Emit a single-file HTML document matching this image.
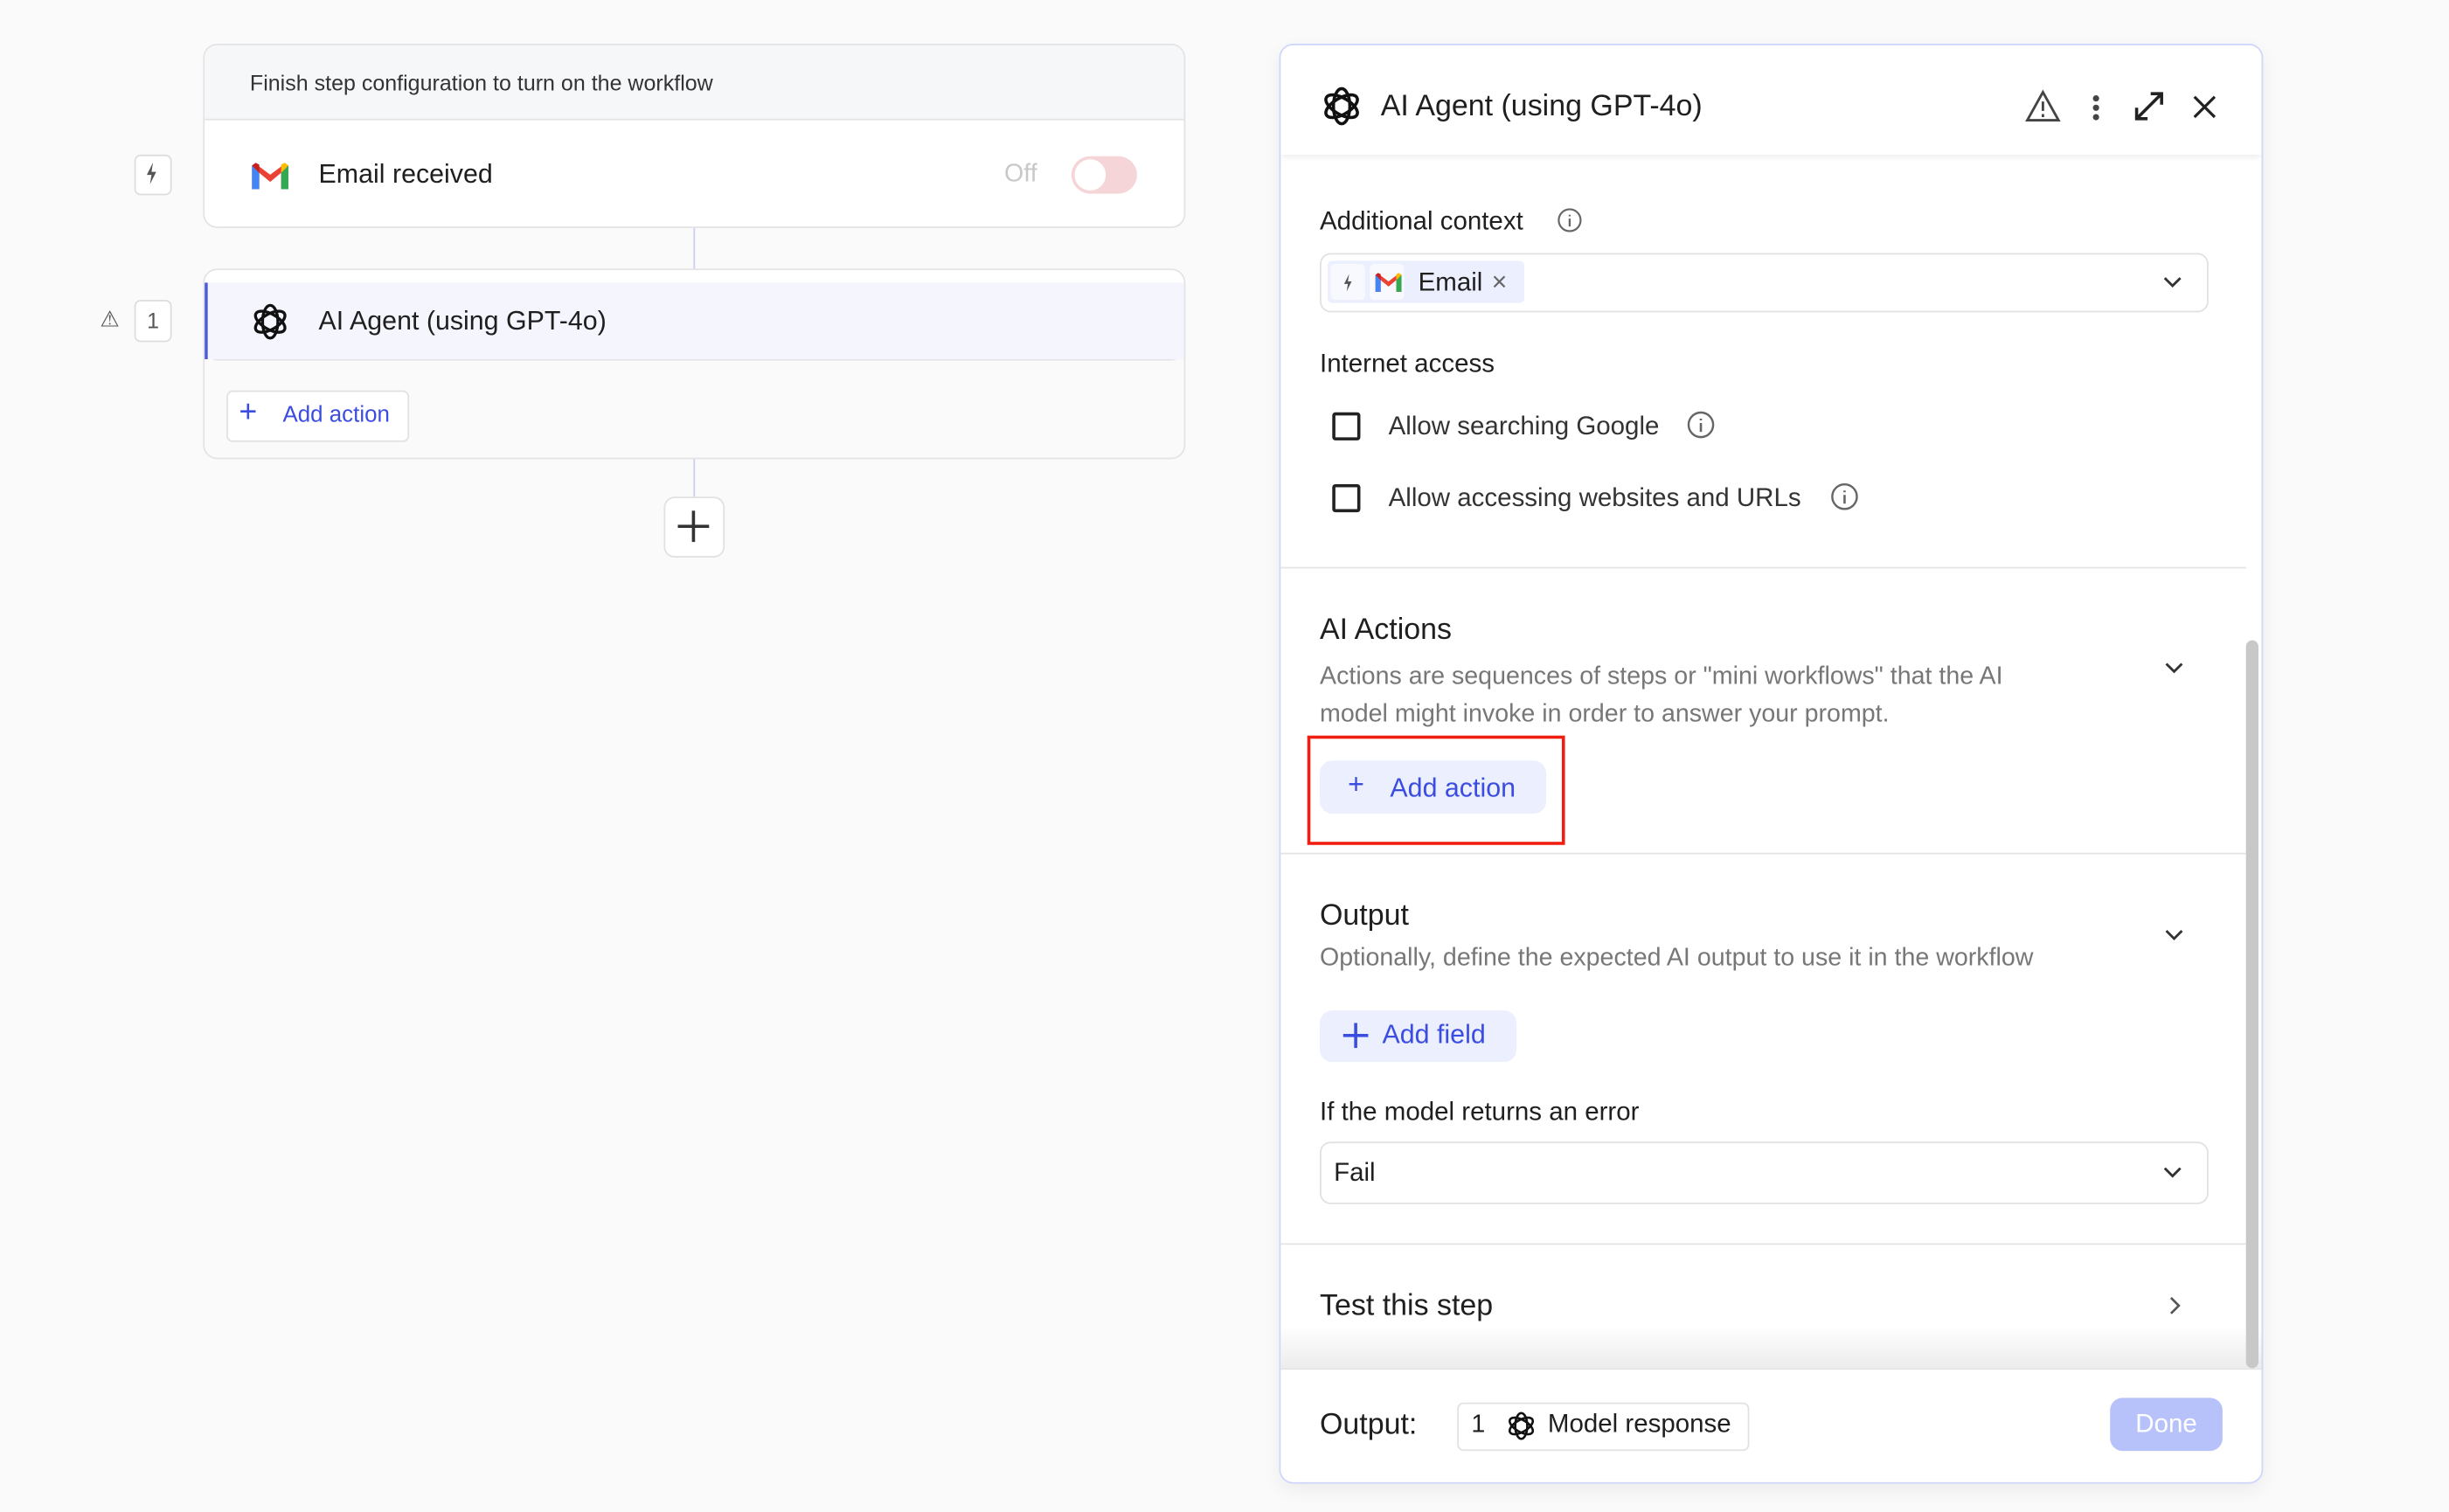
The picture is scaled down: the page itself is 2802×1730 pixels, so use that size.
<!DOCTYPE html>
<html><head><meta charset="utf-8">
<style>
html,body{margin:0;padding:0;width:2802px;height:1730px;overflow:hidden;background:#fafafa}
#s{position:absolute;left:0;top:0;width:1568px;height:968px;transform:scale(1.78699);transform-origin:0 0;font-family:"Liberation Sans",sans-serif;color:#1f1f1f}
.a{position:absolute}
.t{position:absolute;white-space:nowrap}
.chev{position:absolute;width:14px;height:14px}
</style></head><body>
<svg width="0" height="0" style="position:absolute">
<defs>
<g id="oai"><g fill="none" stroke="#111" stroke-width="1.6">
<ellipse cx="12" cy="12" rx="4.2" ry="9" transform="rotate(0 12 12)"/>
<ellipse cx="12" cy="12" rx="4.2" ry="9" transform="rotate(60 12 12)"/>
<ellipse cx="12" cy="12" rx="4.2" ry="9" transform="rotate(120 12 12)"/></g></g>
<g id="gm"><path d="M2 6v13h4V10l6 5 6-5v9h4V6l-2-1-8 6-8-6z" fill="#ea4335"/><path d="M2 6v13h4V10z" fill="#4285f4"/><path d="M18 10v9h4V6z" fill="#34a853"/><path d="M22 6l-4 4V5.5l2-1z" fill="#fbbc04"/><path d="M2 6l4 4V5.5l-2-1z" fill="#c5221f"/></g>
</defs></svg>
<div id="s">
<div class="a" style="left:444px;top:145px;width:1px;height:28px;background:#c9cdf5"></div>
<div class="a" style="left:444px;top:292px;width:1px;height:28px;background:#c9cdf5"></div>
<div class="a" style="left:130px;top:28px;width:627px;height:116px;border:1px solid #e4e4e7;border-radius:9px;background:#fff;overflow:hidden">
 <div class="a" style="left:0;top:0;right:0;height:47px;background:#f6f7f9;border-bottom:1px solid #e4e4e7"></div>
 <div class="t" style="left:29px;top:16px;font-size:14px;color:#333">Finish step configuration to turn on the workflow</div>
 <svg class="a" style="left:28px;top:70px" width="28" height="28" viewBox="0 0 24 24"><use href="#gm"/></svg>
 <div class="t" style="left:73px;top:73px;font-size:17px">Email received</div>
 <div class="t" style="left:512px;top:74px;font-size:16px;color:#c8c8c8">Off</div>
 <div class="a" style="left:555px;top:71px;width:42px;height:24px;border-radius:12px;background:#f5d5d8"></div>
 <div class="a" style="left:557px;top:73px;width:20px;height:20px;border-radius:10px;background:#fff"></div>
</div>
<div class="a" style="left:86px;top:99px;width:22px;height:24px;border:1px solid #ddd;border-radius:4px;background:#fff"></div>
<svg class="a" style="left:92px;top:104px" width="10" height="14" viewBox="0 0 10 14"><path d="M6 0L2 8h3l-1 6 4-8H5z" fill="#555"/></svg>
<div class="a" style="left:130px;top:172px;width:627px;height:120px;border:1px solid #e4e4e7;border-radius:9px;background:#fafafa;overflow:hidden">
 <div class="a" style="left:0;top:0;right:0;height:57px;background:#fff;border-bottom:1px solid #e4e4e7;border-radius:0 0 9px 9px"></div>
 <div class="a" style="left:0;top:8px;right:0;height:49px;background:#f5f6fd;border-left:2px solid #4f5bd5"></div>
 <svg class="a" style="left:28px;top:19px" width="28" height="28" viewBox="0 0 24 24"><use href="#oai"/></svg>
 <div class="t" style="left:73px;top:23px;font-size:17px">AI Agent (using GPT-4o)</div>
 <div class="a" style="left:14px;top:77px;width:115px;height:31px;border:1px solid #e1e1e1;border-radius:4px;background:#fff"></div>
 <div class="t" style="left:22px;top:80px;font-size:20px;color:#3b4de0">+</div>
 <div class="t" style="left:50px;top:85px;font-size:14.5px;color:#3b4de0">Add action</div>
</div>
<div class="t" style="left:64px;top:196px;font-size:14px;color:#555">⚠</div>
<div class="a" style="left:86px;top:192px;width:22px;height:25px;border:1px solid #ddd;border-radius:4px;background:#fff;font-size:14px;color:#555;text-align:center;line-height:25px">1</div>
<div class="a" style="left:425px;top:318px;width:37px;height:37px;border:1px solid #e1e1e1;border-radius:7px;background:#fff"></div>
<div class="a" style="left:434px;top:336px;width:20px;height:2px;background:#333"></div>
<div class="a" style="left:443px;top:327px;width:2px;height:20px;background:#333"></div>

<div class="a" style="left:819px;top:28px;width:628px;height:920px;border:1px solid #cfd6fb;border-radius:9px;background:#fff;overflow:hidden;box-shadow:0 4px 12px rgba(0,0,0,.06)">
 <div class="a" style="left:0;top:0;right:0;height:70px;background:#fff;box-shadow:0 2px 4px rgba(0,0,0,.07);z-index:2"></div>
 <svg class="a" style="left:24px;top:24px;z-index:3" width="30" height="30" viewBox="0 0 24 24"><use href="#oai"/></svg>
 <div class="t" style="left:64px;top:29px;font-size:19px;z-index:3">AI Agent (using GPT-4o)</div>
 <svg class="a" style="left:476px;top:28px;z-index:3" width="24" height="22" viewBox="0 0 24 22"><path d="M12 2L2 20h20z" fill="none" stroke="#444" stroke-width="1.6"/><path d="M12 8v6M12 16v2" stroke="#444" stroke-width="1.6"/></svg>
 <div class="a" style="left:520px;top:32px;width:4px;height:4px;border-radius:2px;background:#444;box-shadow:0 6px 0 #444,0 12px 0 #444;z-index:3"></div>
 <svg class="a" style="left:546px;top:29px;z-index:3" width="20" height="20" viewBox="0 0 20 20"><path d="M2 18L18 2M11 2h7v7M2 11v7h7" fill="none" stroke="#222" stroke-width="2"/></svg>
 <svg class="a" style="left:584px;top:32px;z-index:3" width="15" height="15" viewBox="0 0 15 15"><path d="M1 1l13 13M14 1L1 14" stroke="#222" stroke-width="1.8"/></svg>

 <div class="t" style="left:25px;top:104px;font-size:16.5px">Additional context</div>
 <svg class="a" style="left:177px;top:104px" width="16" height="16" viewBox="0 0 16 16"><circle cx="8" cy="8" r="7" fill="none" stroke="#666" stroke-width="1.2"/><path d="M8 7v5M8 4.5v1" stroke="#666" stroke-width="1.3"/></svg>
 <div class="a" style="left:25px;top:133px;width:567px;height:36px;border:1px solid #e1e1e1;border-radius:7px"></div>
 <div class="a" style="left:30px;top:138px;width:126px;height:27px;background:#eceffd;border-radius:3px"></div>
 <div class="a" style="left:32px;top:140px;width:22px;height:23px;background:#f8f9ff;border-radius:3px"></div>
 <svg class="a" style="left:39px;top:146px" width="8" height="12" viewBox="0 0 10 14"><path d="M6 0L2 8h3l-1 6 4-8H5z" fill="#555"/></svg>
 <div class="a" style="left:57px;top:140px;width:22px;height:23px;background:#f8f9ff;border-radius:3px"></div>
 <svg class="a" style="left:59px;top:142px" width="20" height="20" viewBox="0 0 24 24"><use href="#gm"/></svg>
 <div class="t" style="left:88px;top:143px;font-size:16.5px">Email</div>
 <div class="t" style="left:135px;top:142px;font-size:17px;color:#666">×</div>
 <svg class="chev" style="left:564px;top:145px" viewBox="0 0 14 14"><path d="M2 4l5 5 5-5" fill="none" stroke="#333" stroke-width="1.6"/></svg>

 <div class="t" style="left:25px;top:195px;font-size:16.5px">Internet access</div>
 <div class="a" style="left:33px;top:235px;width:14px;height:14px;border:2px solid #222;border-radius:2px"></div>
 <div class="t" style="left:69px;top:235px;font-size:16.5px;color:#333">Allow searching Google</div>
 <svg class="a" style="left:260px;top:234px" width="18" height="18" viewBox="0 0 16 16"><circle cx="8" cy="8" r="7" fill="none" stroke="#666" stroke-width="1.2"/><path d="M8 7v5M8 4.5v1" stroke="#666" stroke-width="1.3"/></svg>
 <div class="a" style="left:33px;top:281px;width:14px;height:14px;border:2px solid #222;border-radius:2px"></div>
 <div class="t" style="left:69px;top:281px;font-size:16.5px;color:#333">Allow accessing websites and URLs</div>
 <svg class="a" style="left:352px;top:280px" width="18" height="18" viewBox="0 0 16 16"><circle cx="8" cy="8" r="7" fill="none" stroke="#666" stroke-width="1.2"/><path d="M8 7v5M8 4.5v1" stroke="#666" stroke-width="1.3"/></svg>
 <div class="a" style="left:0;top:334px;width:618px;height:1px;background:#e4e4e7"></div>

 <div class="t" style="left:25px;top:364px;font-size:19px">AI Actions</div>
 <div class="t" style="left:25px;top:393px;font-size:16px;color:#777;line-height:24px">Actions are sequences of steps or "mini workflows" that the AI<br>model might invoke in order to answer your prompt.</div>
 <svg class="chev" style="left:565px;top:392px" viewBox="0 0 14 14"><path d="M2 4l5 5 5-5" fill="none" stroke="#333" stroke-width="1.6"/></svg>
 <div class="a" style="left:17px;top:442px;width:161px;height:66px;border:2px solid #f01d10"></div>
 <div class="a" style="left:25px;top:458px;width:145px;height:34px;background:#eceffd;border-radius:8px"></div>
 <div class="t" style="left:43px;top:463px;font-size:18px;color:#3b4de0">+</div>
 <div class="t" style="left:70px;top:466px;font-size:17px;color:#3b4de0">Add action</div>
 <div class="a" style="left:0;top:517px;width:618px;height:1px;background:#e4e4e7"></div>

 <div class="t" style="left:25px;top:547px;font-size:19px">Output</div>
 <div class="t" style="left:25px;top:576px;font-size:16px;color:#777">Optionally, define the expected AI output to use it in the workflow</div>
 <svg class="chev" style="left:565px;top:563px" viewBox="0 0 14 14"><path d="M2 4l5 5 5-5" fill="none" stroke="#333" stroke-width="1.6"/></svg>
 <div class="a" style="left:25px;top:618px;width:126px;height:33px;background:#eceffd;border-radius:8px"></div>
 <div class="a" style="left:40px;top:633px;width:16px;height:2px;background:#3b4de0"></div>
 <div class="a" style="left:47px;top:626px;width:2px;height:16px;background:#3b4de0"></div>
 <div class="t" style="left:65px;top:624px;font-size:17px;color:#3b4de0">Add field</div>
 <div class="t" style="left:25px;top:674px;font-size:16.5px">If the model returns an error</div>
 <div class="a" style="left:25px;top:702px;width:567px;height:38px;border:1px solid #e1e1e1;border-radius:7px"></div>
 <div class="t" style="left:34px;top:713px;font-size:16.5px">Fail</div>
 <svg class="chev" style="left:564px;top:715px" viewBox="0 0 14 14"><path d="M2 4l5 5 5-5" fill="none" stroke="#333" stroke-width="1.6"/></svg>
 <div class="a" style="left:0;top:767px;width:618px;height:1px;background:#e4e4e7"></div>
 <div class="t" style="left:25px;top:797px;font-size:19px">Test this step</div>
 <svg class="chev" style="left:566px;top:800px" viewBox="0 0 14 14"><path d="M4 2l5 5-5 5" fill="none" stroke="#555" stroke-width="1.5"/></svg>
 <div class="a" style="left:0;top:820px;right:0;height:27px;background:linear-gradient(#fff,#ececec)"></div>
 <div class="a" style="left:618px;top:381px;width:8px;height:466px;background:#c8c8c8;border-radius:4px"></div>
 <div class="a" style="left:0;top:847px;right:0;height:1px;background:#e4e4e7"></div>
 <div class="t" style="left:25px;top:873px;font-size:19px">Output:</div>
 <div class="a" style="left:113px;top:869px;width:185px;height:29px;border:1px solid #e1e1e1;border-radius:4px"></div>
 <div class="t" style="left:122px;top:875px;font-size:16px">1</div>
 <svg class="a" style="left:143px;top:873px" width="22" height="22" viewBox="0 0 24 24"><use href="#oai"/></svg>
 <div class="t" style="left:171px;top:874px;font-size:16.5px">Model response</div>
 <div class="a" style="left:531px;top:866px;width:72px;height:34px;background:#b7c2fb;border-radius:8px;color:#fff;font-size:16.5px;text-align:center;line-height:34px">Done</div>
</div>
</div>
</body></html>
